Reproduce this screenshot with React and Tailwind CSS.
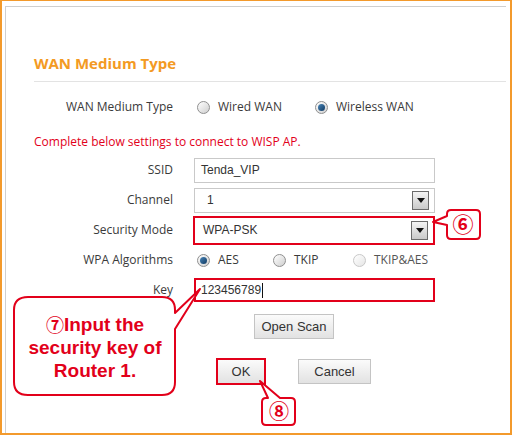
import React from "react";

const RED = "#e2001a";

function Radio({ checked, faded }) {
  return (
    <span
      className={
        "relative inline-block w-[13px] h-[13px] rounded-full border shrink-0 " +
        (faded
          ? "border-[#c8c8c8] bg-gradient-to-br from-[#ffffff] to-[#e6e6e6]"
          : "border-[#8f8f8f] bg-gradient-to-br from-[#ffffff] to-[#cfcfcf]")
      }
    >
      {checked && (
        <span className="absolute left-[2px] top-[2px] w-[7px] h-[7px] rounded-full bg-gradient-to-br from-[#4a86b8] to-[#0f3a63]" />
      )}
    </span>
  );
}

function Option({ checked, faded, label, width }) {
  return (
    <div className={"flex items-center gap-[8px] " + width}>
      <Radio checked={checked} faded={faded} />
      <span className={faded ? "text-[#555]" : ""}>{label}</span>
    </div>
  );
}

function DropArrow() {
  return (
    <span className="flex items-center justify-center w-[17px] h-[19px] mr-[5px] border border-[#6b6b6b] bg-gradient-to-b from-[#f4f4f4] to-[#c9c9c9]">
      <svg width="8" height="5" viewBox="0 0 8 5">
        <path d="M0 0 H8 L4 5 Z" fill="#111" />
      </svg>
    </span>
  );
}

function Row({ label, children }) {
  return (
    <div className="flex items-center h-[30px]">
      <div className="w-[139px] text-right">{label}</div>
      <div className="ml-[21px] flex items-center">{children}</div>
    </div>
  );
}

export default function App() {
  const field = "font-['Liberation_Sans',Arial,sans-serif] text-[12px] text-[#333]";
  const btn =
    "flex items-center justify-center h-[25px] bg-gradient-to-b from-[#fbfbfb] to-[#e2e2e2] font-['Liberation_Sans',Arial,sans-serif] text-[13px] text-[#333]";
  const circled = "font-['Noto_Sans_CJK_JP','DejaVu_Sans',sans-serif] font-bold text-[#e2001a]";

  return (
    <div className="relative w-[512px] h-[435px] bg-white border-t border-l-2 border-r-2 border-b-2 border-[#f39a2c] font-['Open_Sans',sans-serif] text-[12px] text-[#3a3a3a] overflow-hidden">
      <div className="h-full mt-[5px] ml-[3px] mr-[4px] border-t border-l border-[#cfcfcf] pl-[28px] pt-[46px]">
        <h2 className="h-[20px] leading-[20px] text-[15px] font-bold text-[#f39a23]">WAN Medium Type</h2>
        <div className="mt-[8px] border-b border-[#e3e3e3]" />

        <div className="flex items-center h-[24px] mt-[13px]">
          <div className="w-[139px] text-right">WAN Medium Type</div>
          <div className="ml-[24px] flex items-center">
            <Option label="Wired WAN" width="w-[118px]" />
            <Option checked label="Wireless WAN" />
          </div>
        </div>

        <div className="h-[20px] leading-[20px] mt-[13px] text-[#e2001a]">
          Complete below settings to connect to WISP AP.
        </div>

        <div className="mt-[3px]">
          <Row label="SSID">
            <div className={"w-[241px] h-[25px] border border-[#c9c9c9] flex items-center pl-[6px] " + field}>
              Tenda_VIP
            </div>
          </Row>
          <Row label="Channel">
            <div className={"w-[241px] h-[25px] border border-[#c9c9c9] flex items-center justify-between pl-[12px] " + field}>
              <span>1</span>
              <DropArrow />
            </div>
          </Row>
          <Row label="Security Mode">
            <div className={"-ml-[1px] w-[242px] h-[29px] border-2 border-[#e2001a] flex items-center justify-between pl-[8px] " + field}>
              <span>WPA-PSK</span>
              <DropArrow />
            </div>
          </Row>
          <Row label="WPA Algorithms">
            <div className="ml-[3px] flex items-center">
              <Option checked label="AES" width="w-[76px]" />
              <Option label="TKIP" width="w-[80px]" />
              <Option faded label="TKIP&AES" />
            </div>
          </Row>
          <Row label="Key">
            <div className={"w-[241px] h-[24px] border-2 border-[#e2001a] flex items-center pl-[5px] " + field}>
              123456789
              <span className="inline-block w-px h-[15px] bg-[#111] ml-[1px]" />
            </div>
          </Row>
        </div>

        <div className="flex mt-[9px] pl-[220px]">
          <button className={btn + " w-[80px] border border-[#c4c4c4]"}>Open Scan</button>
        </div>

        <div className="flex items-center mt-[19px] pl-[182px]">
          <button className={btn + " w-[50px] h-[27px] border-2 border-[#e2001a]"}>OK</button>
          <button className={btn + " w-[73px] ml-[32px] border border-[#c4c4c4]"}>Cancel</button>
        </div>
      </div>

      {/* annotation callouts */}
      <svg className="absolute left-[-2px] top-[-1px] pointer-events-none" width="512" height="435" viewBox="0 0 512 435">
        <path
          d="M28 297 H162 Q175 297 175 310 V313 L200 289 L175 329 V382 Q175 395 162 395 H28 Q14 395 14 382 V310 Q14 297 28 297 Z"
          fill="#fff"
          stroke={RED}
          strokeWidth="2"
          strokeLinejoin="round"
        />
        <path
          d="M451 210 H476 Q480 210 480 214 V235 Q480 239 476 239 H451 Q447 239 447 235 V225 L433 222 L447 216 V214 Q447 210 451 210 Z"
          fill="#fff"
          stroke={RED}
          strokeWidth="2"
          strokeLinejoin="round"
        />
        <path
          d="M266 398 H268 L260 381 L280 398 H291 Q295 398 295 402 V421 Q295 425 291 425 H266 Q262 425 262 421 V402 Q262 398 266 398 Z"
          fill="#fff"
          stroke={RED}
          strokeWidth="2"
          strokeLinejoin="round"
        />
      </svg>

      <div className="absolute left-[12px] top-[298px] w-[162px] h-[96px] flex flex-col items-center justify-center text-center font-['Liberation_Sans',sans-serif] font-bold text-[19px] leading-[23px] text-[#e2001a]">
        <span className="flex items-center">
          <span className={circled + " text-[18px] leading-[23px]"}>⑦</span>Input the
        </span>
        <span>security key of</span>
        <span>Router 1.</span>
      </div>
      <div className={"absolute left-[444px] top-[208px] w-[34px] h-[30px] flex items-center justify-center text-[21px] " + circled}>
        ⑥
      </div>
      <div className={"absolute left-[260px] top-[396px] w-[34px] h-[28px] flex items-center justify-center text-[20px] " + circled}>
        ⑧
      </div>
    </div>
  );
}
